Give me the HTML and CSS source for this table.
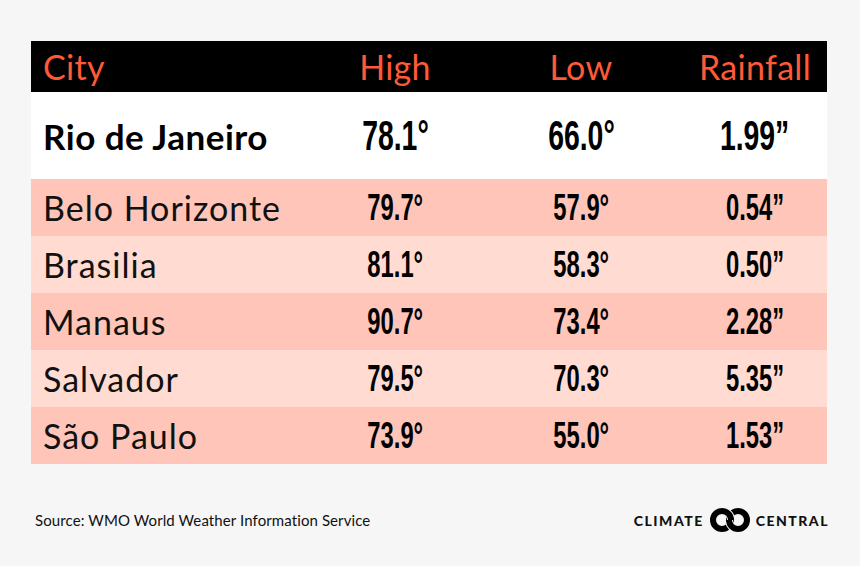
FILE: index.html
```html
<!DOCTYPE html>
<html>
<head>
<meta charset="utf-8">
<link rel="stylesheet" href="styles.css">
</head>
<body>
<div class="page">
  <div class="table">
    <div class="row head">
      <div class="city">City</div>
      <div class="num">High</div>
      <div class="num">Low</div>
      <div class="num">Rainfall</div>
    </div>
    <div class="row feature">
      <div class="city">Rio de Janeiro</div>
      <div class="num"><span class="n">78.1°</span></div>
      <div class="num"><span class="n">66.0°</span></div>
      <div class="num"><span class="n">1.99”</span></div>
    </div>
    <div class="row dark">
      <div class="city">Belo Horizonte</div>
      <div class="num"><span class="n">79.7°</span></div>
      <div class="num"><span class="n">57.9°</span></div>
      <div class="num"><span class="n">0.54”</span></div>
    </div>
    <div class="row light">
      <div class="city">Brasilia</div>
      <div class="num"><span class="n">81.1°</span></div>
      <div class="num"><span class="n">58.3°</span></div>
      <div class="num"><span class="n">0.50”</span></div>
    </div>
    <div class="row dark">
      <div class="city">Manaus</div>
      <div class="num"><span class="n">90.7°</span></div>
      <div class="num"><span class="n">73.4°</span></div>
      <div class="num"><span class="n">2.28”</span></div>
    </div>
    <div class="row light">
      <div class="city">Salvador</div>
      <div class="num"><span class="n">79.5°</span></div>
      <div class="num"><span class="n">70.3°</span></div>
      <div class="num"><span class="n">5.35”</span></div>
    </div>
    <div class="row dark">
      <div class="city">São Paulo</div>
      <div class="num"><span class="n">73.9°</span></div>
      <div class="num"><span class="n">55.0°</span></div>
      <div class="num"><span class="n">1.53”</span></div>
    </div>
  </div>
  <div class="footer">
    <div class="source">Source: WMO World Weather Information Service</div>
    <div class="logo">
      <span class="word">CLIMATE</span>
      <svg class="rings" width="44" height="26" viewBox="0 0 44 26">
        <defs>
          <clipPath id="top-half"><rect x="0" y="0" width="44" height="13"/></clipPath>
        </defs>
        <circle cx="14" cy="13" r="9" fill="none" stroke="#000" stroke-width="6"/>
        <circle cx="30" cy="13" r="9" fill="none" stroke="#f6f6f6" stroke-width="8"/>
        <circle cx="30" cy="13" r="9" fill="none" stroke="#000" stroke-width="6"/>
        <g clip-path="url(#top-half)">
          <circle cx="14" cy="13" r="9" fill="none" stroke="#f6f6f6" stroke-width="8"/>
          <circle cx="14" cy="13" r="9" fill="none" stroke="#000" stroke-width="6"/>
        </g>
      </svg>
      <span class="word">CENTRAL</span>
    </div>
  </div>
</div>
</body>
</html>
```

FILE: styles.css
```css
html, body {
  margin: 0;
  padding: 0;
}
body {
  background: #f6f6f6;
  width: 860px;
  height: 566px;
  overflow: hidden;
  font-family: Lato, "Open Sans", sans-serif;
}
.page {
  padding: 41px 33px 0 31px;
}
.table {
  width: 796px;
}
.row {
  display: grid;
  grid-template-columns: 280px 168px 204px 144px;
  align-items: center;
  height: 57px;
}
.city {
  padding-left: 12px;
  font-size: 34px;
  letter-spacing: 1px;
  color: #111;
  white-space: nowrap;
}
.num {
  text-align: center;
}
.n {
  display: inline-block;
  font-family: "Liberation Sans", Arial, sans-serif;
  font-weight: 700;
  font-size: 36px;
  color: #000;
  transform: scaleX(0.66);
  transform-origin: center;
}
.head {
  height: 51px;
  background: #000;
}
.head .city, .head .num {
  color: #ff5a36;
  font-size: 34px;
  font-weight: 400;
  letter-spacing: 0.3px;
}
.feature {
  height: 87px;
  background: #fff;
}
.feature .city {
  font-weight: 700;
  font-size: 35px;
  letter-spacing: 0.5px;
  color: #000;
}
.feature .n {
  font-size: 43px;
}
.dark {
  background: #fec5b8;
}
.light {
  background: #ffdbd2;
}
.footer {
  display: flex;
  justify-content: space-between;
  align-items: center;
  margin-top: 43px;
  padding-left: 4px;
}
.source {
  font-size: 15px;
  letter-spacing: 0.1px;
  color: #111;
}
.logo {
  display: flex;
  align-items: center;
  gap: 4px;
  margin-right: -2px;
}
.word {
  font-family: Lato, sans-serif;
  font-weight: 900;
  font-size: 14px;
  letter-spacing: 1.5px;
  color: #111;
}
.rings {
  display: block;
}
```
